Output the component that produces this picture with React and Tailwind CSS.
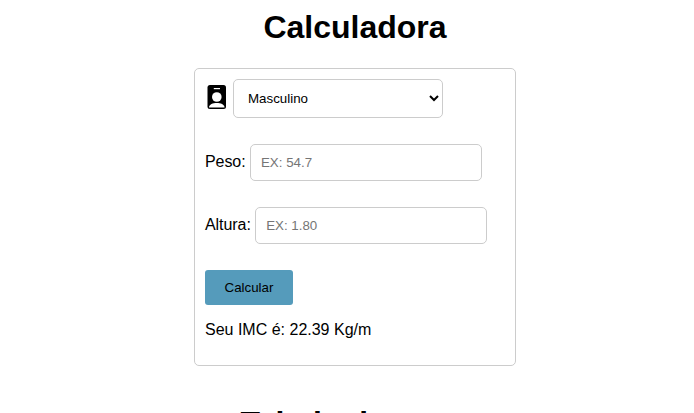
import { useState } from 'react';

function BadgeIcon() {
  return (
    <svg width="24" height="24" viewBox="0 0 24 24" className="mt-[6px] shrink-0">
      <rect x="2.5" y="0" width="18.5" height="24" rx="2.5" fill="#000" />
      <rect x="8.8" y="3" width="6.2" height="1.2" fill="#fff" />
      <circle cx="11.8" cy="12" r="4.8" fill="#fff" />
      <path d="M4 22.4C4 16.6 19.5 16.6 19.5 22.4Z" fill="#fff" />
    </svg>
  );
}

function Field({ label, placeholder }) {
  return (
    <label className="flex h-[37px] items-center whitespace-pre text-base tracking-[-0.07px]">
      <span className="-mt-[2px]">{label}: </span>
      <input
        placeholder={placeholder}
        className="h-[37px] w-[232px] rounded-[5px] border border-[#ccc] bg-white px-[10px] text-[13.333px] tracking-normal outline-none placeholder:text-[#757575]"
      />
    </label>
  );
}

export default function App() {
  const [gender, setGender] = useState('Masculino');
  return (
    <main className="flex h-[413px] flex-col items-center overflow-hidden bg-white pl-4 font-['Liberation_Sans',Arial,sans-serif] text-black">
      <h1 className="mt-[9px] h-[59px] shrink-0 text-[32px] font-bold leading-[37px]">Calculadora</h1>
      <section className="h-[298px] w-[322px] shrink-0 rounded-[5px] border border-[#ccc] p-[10px]">
        <div className="flex">
          <BadgeIcon />
          <select
            value={gender}
            onChange={(e) => setGender(e.target.value)}
            className="ml-[4px] h-[39px] w-[210px] rounded-[5px] border border-[#ccc] bg-white px-[10px] text-[13.333px]"
          >
            <option>Masculino</option>
            <option>Feminino</option>
          </select>
        </div>
        <div className="mt-[26px] flex flex-col gap-[26px]">
          <Field label="Peso" placeholder="EX: 54.7" />
          <Field label="Altura" placeholder="EX: 1.80" />
        </div>
        <button className="mt-[26px] block h-[35px] w-[88px] rounded-[3px] bg-[#559bbb] text-[13.333px]">
          Calcular
        </button>
        <p className="mt-[16px] text-base leading-[18px]">Seu IMC é: 22.39 Kg/m</p>
      </section>
      <h1 className="mt-[39px] shrink-0 text-[32px] font-bold leading-[37px]">Tabela de peso</h1>
    </main>
  );
}
